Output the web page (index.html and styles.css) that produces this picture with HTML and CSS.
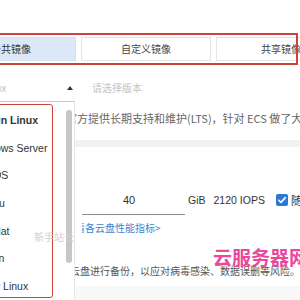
FILE: index.html
```html
<!DOCTYPE html>
<html lang="zh">
<head>
<meta charset="utf-8">
<link rel="stylesheet" href="styles.css">
</head>
<body>
<div class="page">
  <div class="spacer"></div>
  <div class="tabs">
    <div class="tab active">公共镜像</div>
    <div class="tab">自定义镜像</div>
    <div class="tab">共享镜像</div>
  </div>
  <div class="select-row">
    <div class="select os-select"><span class="sel-value">Linux</span><span class="arrow"></span></div>
    <div class="select ver-select">请选择版本</div>
  </div>
  <div class="main">
    <div class="panel">
      <ul class="list">
        <li class="item selected">Aliyun Linux</li>
        <li class="item">Windows Server</li>
        <li class="item">CentOS</li>
        <li class="item">Ubuntu</li>
        <li class="item">Red Hat</li>
        <li class="item">Debian</li>
        <li class="item">Rocky Linux</li>
      </ul>
      <div class="track"><div class="thumb"></div></div>
    </div>
    <div class="content">
      <p class="desc">官方提供长期支持和维护(LTS)，针对 ECS 做了大量优化</p>
      <div class="band"></div>
      <div class="disk-row">
        <div class="disk-input">40</div>
        <span class="unit">GiB</span>
        <span class="iops">2120 IOPS</span>
        <span class="check"><svg viewBox="0 0 12 12" width="12" height="12"><path d="M2.8 6.2 L5 8.4 L9.3 3.6" fill="none" stroke="#fff" stroke-width="1.6" stroke-linecap="round" stroke-linejoin="round"/></svg></span>
        <span class="follow">随实例释放</span>
      </div>
      <div class="link-row"><a class="link">查看各云盘性能指标&gt;</a></div>
      <p class="backup">云盘进行备份，以应对病毒感染、数据误删等风险。</p>
      <div class="bottom-band"></div>
    </div>
  </div>
  <div class="mark-box tabs-mark"></div>
  <div class="mark-box list-mark"></div>
  <div class="wm wm-gray">新手站长</div>
  <div class="wm wm-pink">云服务器网</div>
</div>
</body>
</html>
```

FILE: styles.css
```css
* { box-sizing: border-box; }
html, body { margin: 0; padding: 0; background: #fff; }
body {
  font-family: "Noto Sans CJK SC", "Noto Sans", "Liberation Sans", sans-serif;
  color: #333;
}
.page {
  position: relative;
  width: 300px;
  height: 300px;
  overflow: hidden;
}
.spacer { height: 37px; }

.tabs {
  display: flex;
  gap: 5px;
  margin-left: -54px;
  height: 24px;
}
.tab {
  flex: 0 0 130px;
  border: 1px solid #e4e4e4;
  font-size: 10px;
  line-height: 22px;
  text-align: center;
  color: #444;
  background: #fff;
}
.tab.active {
  background: #dce8f7;
  border-color: #d3e1f3;
  color: #333;
}

.select-row {
  display: flex;
  height: 41px;
}
.select {
  font-size: 10px;
  line-height: 14px;
  padding-top: 20px;
  white-space: nowrap;
}
.os-select {
  flex: 0 0 75px;
  border-bottom: 1px solid #b3cde9;
  display: flex;
  align-items: flex-start;
  overflow: hidden;
}
.sel-value {
  color: #c2c2c2;
  margin-left: -19px;
}
.arrow {
  margin-left: auto;
  margin-right: 2px;
  margin-top: 5px;
  width: 0;
  height: 0;
  border-left: 3px solid transparent;
  border-right: 3px solid transparent;
  border-bottom: 4px solid #333;
}
.ver-select {
  margin-left: 17px;
  color: #c4c4c4;
}

.main {
  display: flex;
  height: 198px;
}
.panel {
  flex: 0 0 75px;
  display: flex;
  border-right: 1px solid #e6e6e6;
  background: #fff;
  overflow: hidden;
}
.list {
  list-style: none;
  margin: 0;
  padding: 5px 0 0;
  flex: 0 0 66px;
  overflow: hidden;
}
.item {
  height: 27.7px;
  line-height: 27.7px;
  font-size: 10.5px;
  font-family: "Liberation Sans", Arial, sans-serif;
  margin-left: -29px;
  white-space: nowrap;
  color: #333;
}
.item.selected { font-weight: 700; margin-left: -25px; }
.track {
  flex: 0 0 8px;
  padding: 8px 2px 0 0;
}
.thumb {
  width: 6px;
  height: 153px;
  border-radius: 3px;
  background: #c6c6c6;
}

.content {
  flex: 1;
  min-width: 0;
  overflow: hidden;
}
.desc {
  margin: 9px 0 0 -9px;
  font-size: 11px;
  line-height: 14px;
  color: #666;
  white-space: nowrap;
}
.band {
  margin-top: 15px;
  height: 7px;
  background: #f2f2f2;
}
.disk-row {
  display: flex;
  align-items: flex-start;
  margin-top: 46px;
  font-size: 10.5px;
  line-height: 14px;
  white-space: nowrap;
  color: #333;
}
.disk-row > * { flex-shrink: 0; }
.disk-input {
  margin-left: 7px;
  width: 103px;
  height: 22px;
  padding-left: 41px;
  border-bottom: 1.5px solid #8c8c8c;
  font-size: 11px;
  font-family: "Liberation Sans", Arial, sans-serif;
}
.unit { margin-left: 3px; font-family: "Liberation Sans", Arial, sans-serif; }
.iops { margin-left: 8px; font-family: "Liberation Sans", Arial, sans-serif; }
.check {
  margin-left: 11px;
  margin-top: 1px;
  width: 12px;
  height: 12px;
  border-radius: 2px;
  background: #2b78d6;
  display: flex;
}
.follow { margin-left: 3px; font-size: 11px; }
.link-row {
  margin: 6px 0 0 7px;
  overflow: hidden;
  white-space: nowrap;
}
.link {
  display: block;
  margin-left: -17px;
  font-size: 10px;
  line-height: 14px;
  color: #3a86d0;
}
.backup {
  margin: 29px 0 0 -5px;
  font-size: 10px;
  line-height: 14px;
  color: #555;
  white-space: nowrap;
}
.bottom-band {
  margin-top: 8px;
  height: 20px;
  background: #f8f8f8;
}

.mark-box {
  position: absolute;
  border: 2px solid #cf4239;
  pointer-events: none;
}
.tabs-mark {
  top: 33px;
  left: -4px;
  width: 302px;
  height: 32px;
}
.list-mark {
  top: 104px;
  left: -4px;
  width: 57px;
  height: 194px;
  border-width: 1.5px;
  border-radius: 3px;
}
.wm {
  position: absolute;
  white-space: nowrap;
  pointer-events: none;
}
.wm-gray {
  left: 34px;
  top: 230px;
  font-size: 10px;
  line-height: 14px;
  color: #d0d0d0;
}
.wm-pink {
  left: 213px;
  top: 246px;
  font-size: 19px;
  line-height: 22px;
  font-weight: 700;
  color: #e9489c;
}
```
